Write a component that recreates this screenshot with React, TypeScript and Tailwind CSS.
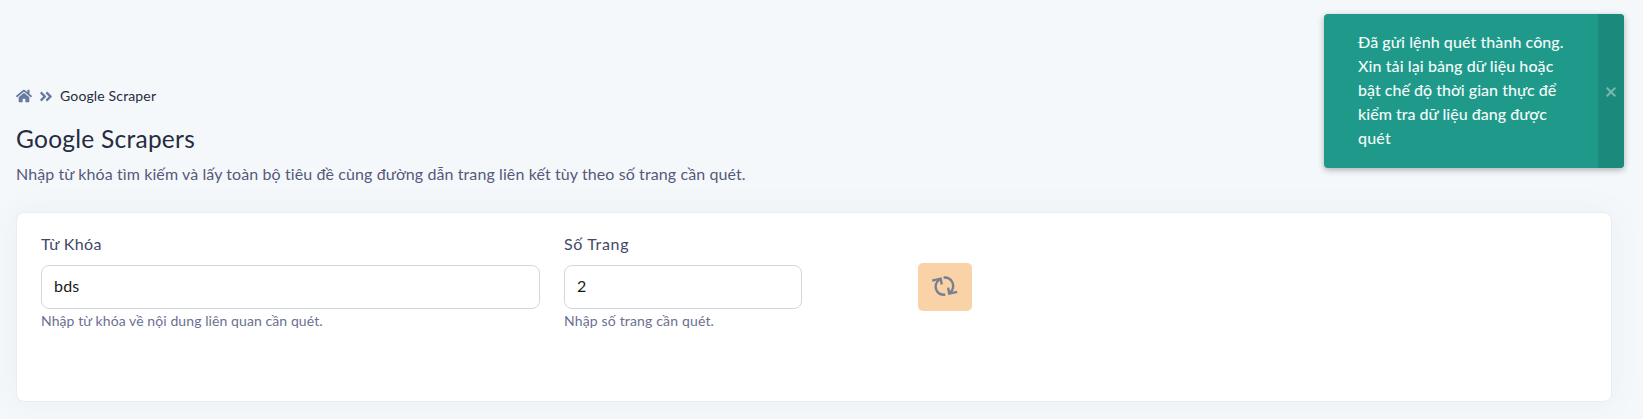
import React from "react";
import { FaHome, FaAngleDoubleRight } from "react-icons/fa";

type FieldProps = {
  id: string;
  label: string;
  value: string;
  hint: string;
  className: string;
  labelClass: string;
  hintClass: string;
};

function Field({ id, label, value, hint, className, labelClass, hintClass }: FieldProps) {
  return (
    <div className={`flex flex-col items-start ${className}`}>
      <label htmlFor={id} className={`mb-[9px] block text-[16px] leading-6 text-[#424867] ${labelClass}`}>
        {label}
      </label>
      <input
        id={id}
        defaultValue={value}
        className="block h-11 w-full rounded-lg border border-[#d1d7e0] bg-white px-3 pb-[3px] text-[16px] leading-6 tracking-[0.2px] text-[#1a1a1a] outline-none"
      />
      <small className={`mt-px block whitespace-nowrap text-[14px] leading-[21px] text-[#6b7090] ${hintClass}`}>{hint}</small>
    </div>
  );
}

function SyncIcon() {
  return (
    <svg width="28" height="24" viewBox="0 0 28 24" fill="none" stroke="#788090" strokeWidth="2.4">
      <path d="M14.2 19.8C5.4 20.2 1.2 10.8 8.2 4.6" />
      <path d="M1.2 5.6 9.6 3.6 10.8 9.6" />
      <path d="M12.6 2.5C21.4 2.1 25.4 11.4 19 17.8" />
      <path d="M17.2 12.6 18.2 18.6 26.2 16.8" />
    </svg>
  );
}

const toastLines = [
  { text: "Đã gửi lệnh quét thành công.", cls: "tracking-[0.08px]" },
  { text: "Xin tải lại bảng dữ liệu hoặc", cls: "tracking-[0.09px]" },
  { text: "bật chế độ thời gian thực để", cls: "tracking-[0.02px]" },
  { text: "kiểm tra dữ liệu đang được", cls: "tracking-[0.02px]" },
  { text: "quét", cls: "tracking-[0.2px]" },
];

function Toast() {
  return (
    <div className="absolute left-[1324px] top-[14px] flex h-[154px] w-[300px] overflow-hidden rounded-sm rounded-bl-[4px] bg-[#1e998a] shadow-[0_2px_6px_rgba(0,0,0,0.3)]">
      <div className="flex-1 pb-[18px] pl-[34px] pt-4 text-[16px] font-medium leading-6 text-[#f4fbfa]">
        {toastLines.map((line) => (
          <div key={line.text}>
            <span className={`whitespace-nowrap ${line.cls}`}>{line.text}</span>
          </div>
        ))}
      </div>
      <button aria-label="Close" className="flex w-[26px] items-center justify-center bg-[#1b8a7c] pt-[2px]">
        <svg width="10" height="10" viewBox="0 0 10 10" stroke="#76b9b0" strokeWidth="2">
          <path d="M.7.7 9.3 9.3M9.3.7.7 9.3" />
        </svg>
      </button>
    </div>
  );
}

export default function App() {
  return (
    <div className="relative h-[419px] w-full overflow-hidden bg-[#f5f8fb] pl-4 pr-[31px] pt-[85px] font-['Lato','Noto_Sans',sans-serif] [font-variant-ligatures:none]">
      <nav className="flex h-[21px] items-center text-[#66799e]">
        <FaHome className="h-4 w-4" />
        <FaAngleDoubleRight className="ml-[7px] mt-px h-[15px] w-[14px]" />
        <span className="ml-[7px] text-[14px] leading-[21px] tracking-[0.15px] text-[#262b40]">Google Scraper</span>
      </nav>
      <h1 className="mt-[17px] text-[24.5px] leading-8 tracking-[0.26px] text-[#262b40]">
        <span>Google Scrapers</span>
      </h1>
      <p className="mt-[7px] text-[16px] leading-6 tracking-[0.098px] text-[#56597a]">
        <span>Nhập từ khóa tìm kiếm và lấy toàn bộ tiêu đề cùng đường dẫn trang liên kết tùy theo số trang cần quét.</span>
      </p>
      <section className="mt-[26px] flex h-[190px] rounded-lg border border-[#e9edf3] bg-white pl-6 pt-[19px] shadow-[0_0_32px_rgba(45,77,95,0.06)]">
        <Field id="keyword" label="Từ Khóa" value="bds" hint="Nhập từ khóa về nội dung liên quan cần quét." className="w-[499px]" labelClass="tracking-[0.4px]" hintClass="tracking-[0.09px]" />
        <Field id="pages" label="Số Trang" value="2" hint="Nhập số trang cần quét." className="ml-6 w-[238px]" labelClass="tracking-[0.65px]" hintClass="tracking-[0.16px]" />
        <button aria-label="Quét" className="ml-[116px] mt-[31px] flex h-12 w-[54px] items-center justify-center rounded-[5px] bg-[#fad2a8]">
          <SyncIcon />
        </button>
      </section>
      <Toast />
    </div>
  );
}
